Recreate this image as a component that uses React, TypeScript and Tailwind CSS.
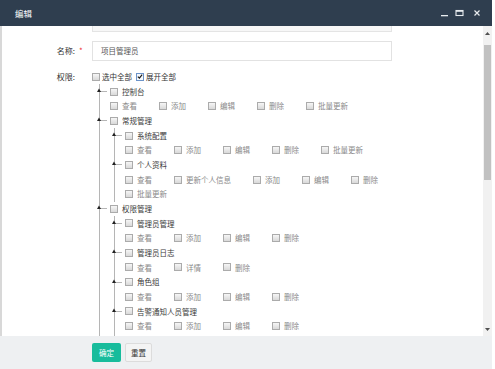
import React from 'react'

type Item = { label: string; actions?: string[]; children?: Item[] }

const TREE: Item[] = [
  { label: '控制台', actions: ['查看', '添加', '编辑', '删除', '批量更新'] },
  {
    label: '常规管理',
    children: [
      { label: '系统配置', actions: ['查看', '添加', '编辑', '删除', '批量更新'] },
      { label: '个人资料', actions: ['查看', '更新个人信息', '添加', '编辑', '删除', '批量更新'] },
    ],
  },
  {
    label: '权限管理',
    children: [
      { label: '管理员管理', actions: ['查看', '添加', '编辑', '删除'] },
      { label: '管理员日志', actions: ['查看', '详情', '删除'] },
      { label: '角色组', actions: ['查看', '添加', '编辑', '删除'] },
      { label: '告警通知人员管理', actions: ['查看', '添加', '编辑', '删除'] },
    ],
  },
]

function Box({ checked = false }: { checked?: boolean }) {
  if (checked) {
    return (
      <span className="w-[8px] h-[8px] shrink-0 border border-[#6b93c9] bg-[#f4f8fc] flex items-center justify-center">
        <svg width="7" height="7" viewBox="0 0 7 7">
          <path d="M1 3.6 L2.8 5.4 L6 1.2" fill="none" stroke="#1b1b1b" strokeWidth="1.4" />
        </svg>
      </span>
    )
  }
  return <span className="w-[8px] h-[8px] shrink-0 border border-[#ababab] bg-linear-to-b from-[#f6f6f6] to-[#d9d9d9]" />
}

function Connector() {
  return (
    <span className="relative w-[7px] h-px bg-[#b5b5b5] shrink-0">
      <svg className="absolute -left-[3px] -top-[3px]" width="4" height="4" viewBox="0 0 4 4">
        <path d="M0 4 L2 0.5 L4 4 Z" fill="#222" />
      </svg>
    </span>
  )
}

function Node({ item, last = false }: { item: Item; last?: boolean }) {
  return (
    <div>
      <div className="flex items-center h-[14.67px]">
        <Connector />
        <span className="ml-[3px] flex"><Box /></span>
        <span className="ml-[4px] text-[#3a3a3a] whitespace-nowrap">{item.label}</span>
      </div>
      {item.actions && (
        <div className="flex flex-wrap gap-x-[22px] pl-[10px]">
          {item.actions.map(a => (
            <div key={a} className="flex items-center h-[14.67px] gap-[4px]">
              <Box />
              <span className="text-[#8a8a8a] whitespace-nowrap">{a}</span>
            </div>
          ))}
        </div>
      )}
      {item.children && (
        <div className={`ml-[14px] border-l border-[#b5b5b5] ${last ? 'pb-[30px]' : ''}`}>
          {item.children.map(c => (
            <Node key={c.label} item={c} />
          ))}
        </div>
      )}
    </div>
  )
}

export default function App() {
  return (
    <div className="w-[495px] h-[369px] bg-white overflow-hidden font-[Noto_Sans_CJK_SC,sans-serif] text-[7.5px] leading-none">
      <div className="w-[492px] h-full flex flex-col">
        {/* Title bar */}
        <div className="h-[26px] shrink-0 bg-[#2f3e4f] flex items-center pl-[15px] pr-[11px]">
          <span className="text-white text-[8.5px]">编辑</span>
          <div className="ml-auto flex items-center gap-[6px]">
            <svg width="8" height="8" viewBox="0 0 8 8">
              <rect x="0" y="6" width="7" height="1.3" fill="#e8ecef" />
            </svg>
            <svg width="9" height="8" viewBox="0 0 9 8">
              <rect x="1" y="1.5" width="7" height="5" fill="none" stroke="#e8ecef" strokeWidth="1.1" />
              <rect x="1" y="1" width="7" height="1.8" fill="#e8ecef" />
            </svg>
            <svg width="8" height="8" viewBox="0 0 8 8" className="ml-[3px]">
              <path d="M1.5 1.5 L6.5 6.5 M6.5 1.5 L1.5 6.5" stroke="#e8ecef" strokeWidth="1.2" />
            </svg>
          </div>
        </div>

        {/* Body */}
        <div className="flex-1 min-h-0 flex border-l-[2px] border-[#d8d8d8]">
          <div className="flex-1 min-w-0 bg-white overflow-hidden">
            {/* scrolled-off input */}
            <div className="flex">
              <div className="w-[90px] shrink-0" />
              <div className="w-[300px] h-[6px] border-x border-b border-[#e4e4e4] bg-[#f7f7f7]" />
            </div>

            {/* 名称 */}
            <div className="flex items-center mt-[9px] h-[20px]">
              <div className="w-[73px] shrink-0 text-right text-[#333] text-[8px]">名称:</div>
              <div className="w-[17px] shrink-0 pl-[4px] text-[#e33] text-[8px]">*</div>
              <div className="w-[300px] h-[20px] border border-[#e2e2e2] flex items-center pl-[8px] text-[#555]">项目管理员</div>
            </div>

            {/* 权限 */}
            <div className="flex mt-[8.6px]">
              <div className="w-[73px] shrink-0 h-[14.67px] flex items-center justify-end text-[#333] text-[8px]">权限:</div>
              <div className="w-[17px] shrink-0" />
              <div className="w-[300px]">
                <div className="flex items-center h-[14.67px]">
                  <Box />
                  <span className="ml-[2px] text-[#333]">选中全部</span>
                  <span className="ml-[4px] flex"><Box checked /></span>
                  <span className="ml-[2px] text-[#333]">展开全部</span>
                </div>
                <div className="ml-[7px] border-l border-[#b5b5b5]">
                  {TREE.map((i, idx) => (
                    <Node key={i.label} item={i} last={idx === TREE.length - 1} />
                  ))}
                </div>
              </div>
            </div>
          </div>

          {/* Scrollbar */}
          <div className="w-[9px] shrink-0 bg-[#f1f1f1] flex flex-col">
            <div className="h-[14px] flex items-center justify-center">
              <svg width="5" height="3" viewBox="0 0 5 3"><path d="M0 3 L2.5 0 L5 3 Z" fill="#505050" /></svg>
            </div>
            <div className="h-[5px]" />
            <div className="h-[135px] mx-[1px] bg-[#c1c1c1]" />
            <div className="flex-1" />
            <div className="h-[14px] flex items-center justify-center">
              <svg width="5" height="3" viewBox="0 0 5 3"><path d="M0 0 L2.5 3 L5 0 Z" fill="#505050" /></svg>
            </div>
          </div>
        </div>

        {/* Footer */}
        <div className="h-[33px] shrink-0 bg-[#eef0f2] flex items-start pt-[7px] pl-[92px] gap-[4px]">
          <button className="w-[29px] h-[19px] rounded-[2px] bg-[#18bc9c] text-white text-[7.5px] flex items-center justify-center">确定</button>
          <button className="w-[27px] h-[19px] rounded-[2px] bg-[#f4f4f4] border border-[#dcdcdc] text-[#333] text-[7.5px] flex items-center justify-center">重置</button>
        </div>
      </div>
    </div>
  )
}
